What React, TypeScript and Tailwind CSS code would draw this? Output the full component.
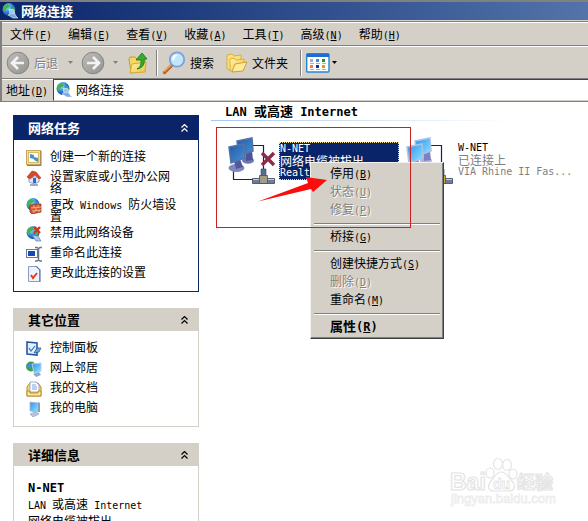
import React from 'react';

const items = ['文件|F', '编辑|E', '查看|V', '收藏|A', '工具|T', '高级|N', '帮助|H'];

/* Half-width text run */
function Latin({ children, bold }: { children: React.ReactNode; bold?: boolean }) {
  return (
    <span
      className={`font-['DejaVu_Sans_Mono',monospace] leading-0 whitespace-pre ${bold ? 'text-[12px]' : 'text-[10px]'}`}
    >
      {children}
    </span>
  );
}

/* A whole line of half-width text */
function LatinLine({ children, dark }: { children: React.ReactNode; dark?: boolean }) {
  return (
    <p className={`font-['DejaVu_Sans_Mono',monospace] text-[10px] leading-3 ${dark ? 'text-black' : ''}`}>
      {children}
    </p>
  );
}

function Accel({ k, bold }: { k: string; bold?: boolean }) {
  return (
    <Latin bold={bold}>
      (<u>{k}</u>)
    </Latin>
  );
}

/* ---------- Icons ---------- */

function Defs() {
  return (
    <svg className="absolute w-0 h-0" aria-hidden="true">
      <defs>
        <radialGradient id="globe" cx="0.35" cy="0.3" r="0.8">
          <stop offset="0" stopColor="#a8e0ff" />
          <stop offset="0.5" stopColor="#2f86d8" />
          <stop offset="1" stopColor="#0b3a8c" />
        </radialGradient>
        <linearGradient id="screenOn" x1="0" y1="0" x2="1" y2="1">
          <stop offset="0" stopColor="#2d8ff0" />
          <stop offset="1" stopColor="#8fe8ff" />
        </linearGradient>
        <linearGradient id="screenOff" x1="0" y1="0" x2="1" y2="1">
          <stop offset="0" stopColor="#2458a8" />
          <stop offset="1" stopColor="#4294d4" />
        </linearGradient>
        <linearGradient id="folder" x1="0" y1="0" x2="1" y2="1">
          <stop offset="0" stopColor="#fff6b0" />
          <stop offset="1" stopColor="#f0c040" />
        </linearGradient>
        <linearGradient id="disc" x1="0" y1="0" x2="1" y2="1">
          <stop offset="0" stopColor="#bcbcba" />
          <stop offset="1" stopColor="#949492" />
        </linearGradient>
      </defs>
    </svg>
  );
}

function Globe() {
  return (
    <>
      <circle cx="7" cy="6.5" r="6.5" fill="url(#globe)" />
      <path d="M1 5c1-3 3-4 5-4l2 2-2 2-2 1v2l-2 1zM9 6l3-2 1 3-2 3-2-1z" fill="#43b649" />
    </>
  );
}

function NetIcon() {
  return (
    <svg viewBox="0 0 16 16" className="size-4 shrink-0">
      <Globe />
      <path d="M7 6l5 1 1 5-5-1z" fill="#8fc8f5" stroke="#d8e8f8" strokeWidth="0.8" />
      <path d="M6 12c3-2 7-2 8 1l2 2h-5z" fill="#7fa8dc" stroke="#dfe9f4" strokeWidth="0.6" />
    </svg>
  );
}

function Disc({ forward }: { forward?: boolean }) {
  return (
    <svg viewBox="0 0 24 24" className="size-6 shrink-0">
      <circle cx="12" cy="12" r="10.8" fill="url(#disc)" stroke="#858583" />
      <g transform={forward ? 'rotate(180 12 12)' : undefined}>
        <path d="M12 6l-6 6 6 6M7 12h11" fill="none" stroke="#f4f3f0" strokeWidth="2.6" />
      </g>
    </svg>
  );
}

function Caret({ dim }: { dim?: boolean }) {
  return (
    <svg viewBox="0 0 5 3" className={`w-[5px] h-[3px] shrink-0 ${dim ? 'text-[#808080]' : 'text-black'}`}>
      <path d="M0 0h5L2.5 3z" fill="currentColor" />
    </svg>
  );
}

function UpFolder() {
  return (
    <svg viewBox="0 0 20 24" className="w-5 h-6 shrink-0">
      <path d="M1 8l1-2h5l2 2h8v12l-14 2z" fill="#f5d76a" stroke="#c9992a" />
      <path d="M2 22l2-9 14-2-1 10z" fill="url(#folder)" stroke="#d6a838" />
      <path d="M9 18c4-2 4-5 4-9H8l6-7 5 6h-3c1 5-1 9-7 10z" fill="#2fae2f" stroke="#12761a" strokeWidth="0.8" />
    </svg>
  );
}

function SearchIcon() {
  return (
    <svg viewBox="0 0 24 24" className="size-6 shrink-0">
      <path d="M9.5 14.5L2.5 21.5" stroke="#b5652d" strokeWidth="3.2" strokeLinecap="round" />
      <path d="M9 14L2 20.5" stroke="#f0b070" strokeWidth="1.2" />
      <circle cx="15" cy="8.5" r="7.2" fill="#bfe6fb" stroke="#7f9fd8" strokeWidth="1.8" />
      <path d="M10 8c0-3 3-5 6-4-2 1-4 3-4 6z" fill="#fff" />
    </svg>
  );
}

function FoldersIcon() {
  return (
    <svg viewBox="0 0 22 20" className="w-[22px] h-5 shrink-0">
      <path d="M1 16V2l5-1 2 2 7-1v4L5 17z" fill="#f9e17e" stroke="#dcae3c" />
      <path d="M4 18V6l4-1 2 2 8-1v3l-3 9z" fill="url(#folder)" stroke="#dcae3c" />
      <path d="M6 19l3-8 12-2-4 9z" fill="#fdeb9a" stroke="#d0a030" />
    </svg>
  );
}

function ViewsIcon() {
  return (
    <svg viewBox="0 0 24 20" className="w-6 h-5 shrink-0">
      <rect x="0.7" y="0.7" width="22.3" height="18.3" rx="1" fill="#fff" stroke="#2a82d0" strokeWidth="1.4" />
      <path d="M1 1h22v3H1z" fill="#1f6cd0" />
      <path d="M4 6h3v3H4z" fill="#a9a9cf" />
      <path d="M10 6h3v3h-3z" fill="#3f8ae0" />
      <path d="M16 6h3v3h-3z" fill="#189a28" />
      <path d="M4 12h3v3H4z" fill="#ef8055" />
      <path d="M10 12h3v3h-3z" fill="#102f98" />
      <path d="M16 12h3v3h-3z" fill="#c9a12c" />
      <path d="M4 10.5h4M10 10.5h4M16 10.5h4M4 16.5h4M10 16.5h4M16 16.5h4" stroke="#b0b0b0" />
    </svg>
  );
}

function Chevrons() {
  return (
    <svg viewBox="0 0 7 8" className="w-[7px] h-2">
      <path d="M0.5 3.5l3-3 3 3M0.5 7.5l3-3 3 3" fill="none" stroke="currentColor" strokeWidth="1.2" />
    </svg>
  );
}

const smallIcons: Record<string, React.ReactNode> = {
  create: (
    <>
      <rect x="0.5" y="0.5" width="14" height="14" fill="#f3dc9a" stroke="#c8a860" />
      <rect x="2.5" y="2.5" width="10" height="10" fill="#fffbe8" stroke="#d8bb6c" />
      <path d="M4 4l4 1v4l-4-1zM8 7l4 1v4l-4-2z" fill="#3f93dc" />
      <path d="M15 1v14.5H1" fill="none" stroke="#8c7c5c" />
    </>
  ),
  home: (
    <>
      <path d="M3 7h10v5l-5 2-5-2z" fill="#dce8f8" stroke="#8aa4cc" />
      <path d="M1 7l5-6 4 1 5 6-2 1-4-4-5 4z" fill="#d8492c" stroke="#a83a20" strokeWidth="0.6" />
      <path d="M7 8h3v5H7z" fill="#2a6fc8" />
      <path d="M4 15h8" stroke="#8793a8" strokeWidth="1.5" />
    </>
  ),
  firewall: (
    <>
      <Globe />
      <path d="M4 7l11-1v8L6 16l-2-2z" fill="#d9542c" stroke="#8c2c12" strokeWidth="0.7" />
      <path d="M5 10l10-1M6 13l9-1M8 7v3M12 6.5v3M10 10v3M8 13v2M13 12v2" stroke="#f7c79c" strokeWidth="0.8" />
    </>
  ),
  disable: (
    <>
      <Globe />
      <path d="M8 1l6 6M14 1L8 7" stroke="#d9341c" strokeWidth="2.4" />
      <path d="M6 9l6 1 3 5-5 0z" fill="#a8c8ec" stroke="#5c84b8" strokeWidth="0.7" />
    </>
  ),
  rename: (
    <>
      <rect x="0.5" y="3.5" width="11" height="8" fill="#fff" stroke="#6f7890" />
      <path d="M2 5h7v5H2z" fill="#1348b8" />
      <path d="M9 1.5h2l1.5 1 1.5-1h2M12.5 2v12M9 15h2l1.5-1 1.5 1h2" fill="none" stroke="#6b7488" strokeWidth="1.5" />
    </>
  ),
  settings: (
    <>
      <path d="M2.5 0.5h8l3 3v12h-11z" fill="#eef2ff" stroke="#8d9cc4" />
      <path d="M10 0l4 4v12" fill="none" stroke="#5c7cb8" strokeWidth="1.2" />
      <path d="M5 9l2 3 4-5" fill="none" stroke="#e0401c" strokeWidth="2" />
    </>
  ),
  panel: (
    <>
      <path d="M1 1l10 1v12L1 13z" fill="#e4effc" stroke="#2557a0" strokeWidth="1.6" />
      <path d="M3 7l2 3 4-5" fill="none" stroke="#2a6fc8" strokeWidth="1.2" />
      <path d="M8 12l3-5 4 0-2 4z" fill="#6fa3dc" stroke="#2b4f88" strokeWidth="0.7" />
    </>
  ),
  places: (
    <>
      <circle cx="5" cy="5.5" r="5" fill="#3fa04c" />
      <path d="M1 4l3-2 2 2-3 4z" fill="#3f8fd8" />
      <path d="M6 3l9-1v8l-7 2z" fill="url(#screenOn)" stroke="#b8cce8" />
      <path d="M7 13l6-2 2 3-5 2z" fill="#8fa8cf" />
    </>
  ),
  docs: (
    <>
      <path d="M1 6l3-4h8l3 4v9H1z" fill="#f6d878" stroke="#b98b2c" />
      <path d="M4 1h6l3 3v7H4z" fill="#fff" stroke="#8c9cc0" strokeWidth="0.8" />
      <path d="M6 4h4M6 6h5M6 8h5" stroke="#7da4dc" />
      <path d="M1 10h3v2h8v-2h3v5H1z" fill="#fbe79c" stroke="#b98b2c" />
    </>
  ),
  computer: (
    <>
      <path d="M4 1l8 1v9l-8-1z" fill="url(#screenOn)" stroke="#a8bcd8" />
      <path d="M12 1l2 1v9l-2 0z" fill="#8c9cc0" />
      <path d="M4 13l5-2 4 2-6 3z" fill="#b8c4dc" stroke="#8b9cc0" strokeWidth="0.6" />
    </>
  ),
};

function ConnectionIcon({ off }: { off?: boolean }) {
  const fill = off ? 'url(#screenOff)' : 'url(#screenOn)';
  const edge = off ? '#5573a8' : '#a9c4e4';
  return (
    <svg viewBox="0 0 50 50" className="size-[50px] shrink-0">
      <path d="M25 8.5h10.5V34M5.5 34v8.5H25" fill="none" stroke="#0a246a" strokeWidth="1.2" />
      <ellipse cx="20" cy="23.5" rx="6" ry="3.2" fill={off ? '#7078b0' : '#b4b4e0'} />
      <path d="M17 15l7-1 1 9-7 1z" fill={off ? '#4c5498' : '#7f80c4'} />
      <path d="M9 4l15-3 1 13-14 5z" fill={fill} stroke={edge} strokeWidth="1.5" />
      <ellipse cx="8.5" cy="31" rx="8" ry="4" fill={off ? '#8088b8' : '#c4c4ec'} />
      <path d="M6 24l6-2 3 8-7 2z" fill={off ? '#5058a0' : '#8f90d0'} />
      <path d="M1 10l15-3 1 14-14 5z" fill={fill} stroke={edge} strokeWidth="1.5" />
      {off && <path d="M34 16l12 12M46 16L34 28" stroke="#8c2c48" strokeWidth="3.4" />}
      <path d="M33 32h5v7h-5z" fill="#5c6c90" stroke="#34405c" strokeWidth="0.6" />
      <path d="M24.5 41.5h22v5h-22z" fill="#6f7c98" stroke="#3c4658" strokeWidth="0.8" />
      <path d="M25 42.5h21" stroke="#c4cedc" />
      <path d="M31.5 38.5h8v8h-8z" fill={off ? '#a09c88' : '#c9a44c'} stroke="#4c5058" strokeWidth="0.8" />
    </svg>
  );
}

function Watermark() {
  return (
    <svg viewBox="0 0 110 52" className="absolute right-7 bottom-3 w-[110px] h-[52px] pointer-events-none">
      <g fill="#fff" stroke="#e4e4e4" strokeWidth="1.2">
        <text x="0" y="33" fontFamily="Liberation Sans" fontWeight="bold" fontSize="23">Bai</text>
        <ellipse cx="40" cy="16" rx="4" ry="5" />
        <ellipse cx="48" cy="7" rx="4.5" ry="5.5" />
        <ellipse cx="57" cy="8" rx="4.5" ry="5.5" />
        <ellipse cx="63" cy="17" rx="4" ry="5" />
        <path d="M51 15c-5 0-6 5-10 9s-3 10 3 10h15c6 0 7-6 3-10s-6-9-11-9z" />
        <text x="43" y="32" fontFamily="Liberation Sans" fontWeight="bold" fontSize="14" strokeWidth="0.8">du</text>
        <text x="67" y="32" fontFamily="Noto Sans CJK SC" fontWeight="bold" fontSize="18">经验</text>
      </g>
      <text x="1" y="46" fontFamily="Liberation Sans" fontSize="13" fill="#fff" stroke="#ececec" strokeWidth="0.8">jingyan.baidu.com</text>
    </svg>
  );
}

/* ---------- Side panels ---------- */

function Panel({ title, primary, children }: { title: string; primary?: boolean; children: React.ReactNode }) {
  return (
    <section className={primary ? 'border border-[#0a246a]' : 'border border-t-0 border-[#d4d0c8]'}>
      <header
        className={`flex items-center justify-between pl-3.5 pr-2.5 ${
          primary ? 'h-6 bg-[#0a246a] text-white' : 'h-[23px] bg-[#d4d0c8]'
        }`}
      >
        <h2 className="text-[13px] font-bold">{title}</h2>
        <button type="button" aria-label={title}>
          <Chevrons />
        </button>
      </header>
      {children}
    </section>
  );
}

function LinkList({ children }: { children: React.ReactNode }) {
  return <ul className="pt-2 pb-[7px] pl-3 pr-5">{children}</ul>;
}

function LinkItem({ icon, children }: { icon: string; children: React.ReactNode }) {
  return (
    <li className="min-h-5">
      <a href="#" className="flex items-start gap-2">
        <svg viewBox="0 0 16 16" className="size-4 mt-0.5 -mb-0.5 shrink-0">
          {smallIcons[icon]}
        </svg>
        <span className="py-0.5 leading-3">{children}</span>
      </a>
    </li>
  );
}

/* ---------- Context menu ---------- */

function MenuItem({ label, k, disabled, bold }: { label: string; k: string; disabled?: boolean; bold?: boolean }) {
  return (
    <button
      type="button"
      role="menuitem"
      disabled={disabled}
      className={`block w-full h-[18px] pl-[17px] pb-0.5 text-left leading-4 whitespace-nowrap ${
        disabled ? 'text-[#808080] [text-shadow:1px_1px_0_#fff]' : ''
      } ${bold ? 'text-[13px] font-bold' : ''}`}
    >
      {label}
      <Accel k={k} bold={bold} />
    </button>
  );
}

function MenuLine() {
  return <hr className="mt-1 mb-[3px] mx-px h-0.5 border-0 border-t border-b border-t-[#808080] border-b-white" />;
}

function Sep() {
  return <div className="w-0.5 h-[26px] border-l border-r border-l-[#808080] border-r-white shrink-0" />;
}

export default function App() {
  return (
    <div className="relative flex flex-col h-screen overflow-hidden bg-white text-black text-[12px] leading-4 font-['Noto_Sans_CJK_SC',sans-serif]">
      <Defs />

      {/* Title bar */}
      <div className="flex items-center gap-[3px] h-[21px] pl-0.5 border-t-2 border-t-[#808080] border-b border-b-[#d4d0c8] bg-linear-to-r from-[#0a246a] to-[#5274aa] shrink-0">
        <NetIcon />
        <h1 className="text-[13px] font-bold text-white">网络连接</h1>
      </div>

      <div className="border-l-2 border-t border-[#808080] bg-[#d4d0c8] shrink-0">
        {/* Menu bar */}
        <nav className="flex items-center gap-4 h-6 pl-2 border-t border-b border-t-white border-b-[#808080]">
          {items.map((item) => (
            <button key={item} type="button" className="whitespace-nowrap">
              {item.split('|')[0]}
              <Accel k={item.split('|')[1]} />
            </button>
          ))}
        </nav>

        {/* Toolbar */}
        <div className="flex items-center h-[33px] pl-1 border-t border-b border-t-white border-b-[#808080]">
          <button type="button" disabled className="flex items-center gap-1 text-[#808080] [text-shadow:1px_1px_0_#fff]">
            <Disc />
            后退
            <span className="flex items-center pl-1.5"><Caret dim /></span>
          </button>
          <button type="button" disabled aria-label="前进" className="flex items-center gap-2 pl-2">
            <Disc forward />
            <Caret dim />
          </button>
          <button type="button" aria-label="向上" className="pl-2.5 pr-2">
            <UpFolder />
          </button>
          <Sep />
          <button type="button" className="flex items-center gap-1 pl-1">
            <SearchIcon />
            搜索
          </button>
          <button type="button" className="flex items-center gap-1 px-3">
            <FoldersIcon />
            文件夹
          </button>
          <Sep />
          <button type="button" aria-label="查看" className="flex items-center gap-0.5 pl-1">
            <ViewsIcon />
            <Caret />
          </button>
        </div>

        {/* Address bar */}
        <div className="flex h-[23px] border-b border-[#808080]">
          <label htmlFor="address" className="flex items-center w-[51px] pl-1 pb-0.5 whitespace-nowrap border-t border-white">
            <span>
              地址
              <Accel k="D" />
            </span>
          </label>
          <div className="flex flex-1 items-center gap-1 pl-0.5 bg-white border-t border-l border-b border-t-[#404040] border-l-[#404040] border-b-[#d4d0c8]">
            <NetIcon />
            <input id="address" defaultValue="网络连接" className="flex-1 min-w-0 bg-white outline-none" />
          </div>
        </div>
      </div>

      <div className="flex flex-1 min-h-0">
        {/* Sidebar */}
        <aside className="w-[211px] pt-[13px] pl-[13px] pr-3 shrink-0">
          <div className="flex flex-col gap-4">
            <Panel title="网络任务" primary>
              <LinkList>
                <LinkItem icon="create">创建一个新的连接</LinkItem>
                <LinkItem icon="home">设置家庭或小型办公网络</LinkItem>
                <LinkItem icon="firewall">更改<Latin> Windows </Latin>防火墙设置</LinkItem>
                <LinkItem icon="disable">禁用此网络设备</LinkItem>
                <LinkItem icon="rename">重命名此连接</LinkItem>
                <LinkItem icon="settings">更改此连接的设置</LinkItem>
              </LinkList>
            </Panel>

            <Panel title="其它位置">
              <LinkList>
                <LinkItem icon="panel">控制面板</LinkItem>
                <LinkItem icon="places">网上邻居</LinkItem>
                <LinkItem icon="docs">我的文档</LinkItem>
                <LinkItem icon="computer">我的电脑</LinkItem>
              </LinkList>
            </Panel>

            <Panel title="详细信息">
              <div className="pt-3 pb-4 pl-3.5 leading-[17px]">
                <p className="font-bold"><Latin bold>N-NET</Latin></p>
                <p><Latin>LAN </Latin>或高速<Latin> Internet</Latin></p>
                <p>网络电缆被拔出</p>
              </div>
            </Panel>
          </div>
        </aside>

        {/* Connections */}
        <main className="flex-1 min-w-0">
          <h2 className="h-[18px] pl-3.5 text-[13px] leading-[18px] font-bold">
            <Latin bold>LAN </Latin>或高速<Latin bold> Internet</Latin>
          </h2>
          <div className="h-px w-4/5 bg-linear-to-r from-[#a4c8f0] to-white" />

          <div className="flex pt-4 pl-[17px]">
            <div className="relative flex w-[178px] shrink-0">
              <ConnectionIcon off />
              <div className="w-[120px] h-[38px] mt-[5px] ml-px border border-dotted border-[#f5db95] bg-[#0a246a] text-white leading-3 whitespace-nowrap">
                <LatinLine>N-NET</LatinLine>
                <p>网络电缆被拔出</p>
                <LatinLine>Realt</LatinLine>
              </div>

              {/* Context menu */}
              <div
                role="menu"
                className="absolute left-[82px] top-[25px] z-10 w-[134px] p-0.5 bg-[#d4d0c8] border border-l-[#f4f2ee] border-t-[#f4f2ee] border-r-[#404040] border-b-[#404040] shadow-[inset_-1px_-1px_0_#808080]"
              >
                <MenuItem label="停用" k="B" />
                <MenuItem label="状态" k="U" disabled />
                <MenuItem label="修复" k="P" disabled />
                <MenuLine />
                <MenuItem label="桥接" k="G" />
                <MenuLine />
                <MenuItem label="创建快捷方式" k="S" />
                <MenuItem label="删除" k="D" disabled />
                <MenuItem label="重命名" k="M" />
                <MenuLine />
                <MenuItem label="属性" k="R" bold />
              </div>

              {/* Highlight frame and arrow */}
              <div className="absolute -left-3 -top-2.5 z-20 w-[195px] h-[101px] border border-[#cc2020] pointer-events-none" />
              <svg viewBox="0 0 70 28" className="absolute left-[30px] top-[37px] z-20 w-[70px] h-7 pointer-events-none">
                <path d="M0 27.500L50 9L48 3L69 6L55 18L53 15Z" fill="#fb0d0d" />
              </svg>
            </div>

            <div className="flex shrink-0">
              <ConnectionIcon />
              <div className="w-[120px] mt-[5px] ml-0.5 leading-3 text-[#808080] whitespace-nowrap">
                <LatinLine dark>W-NET</LatinLine>
                <p>已连接上</p>
                <LatinLine>VIA Rhine II Fas...</LatinLine>
              </div>
            </div>
          </div>
        </main>
      </div>

      <Watermark />
    </div>
  );
}
